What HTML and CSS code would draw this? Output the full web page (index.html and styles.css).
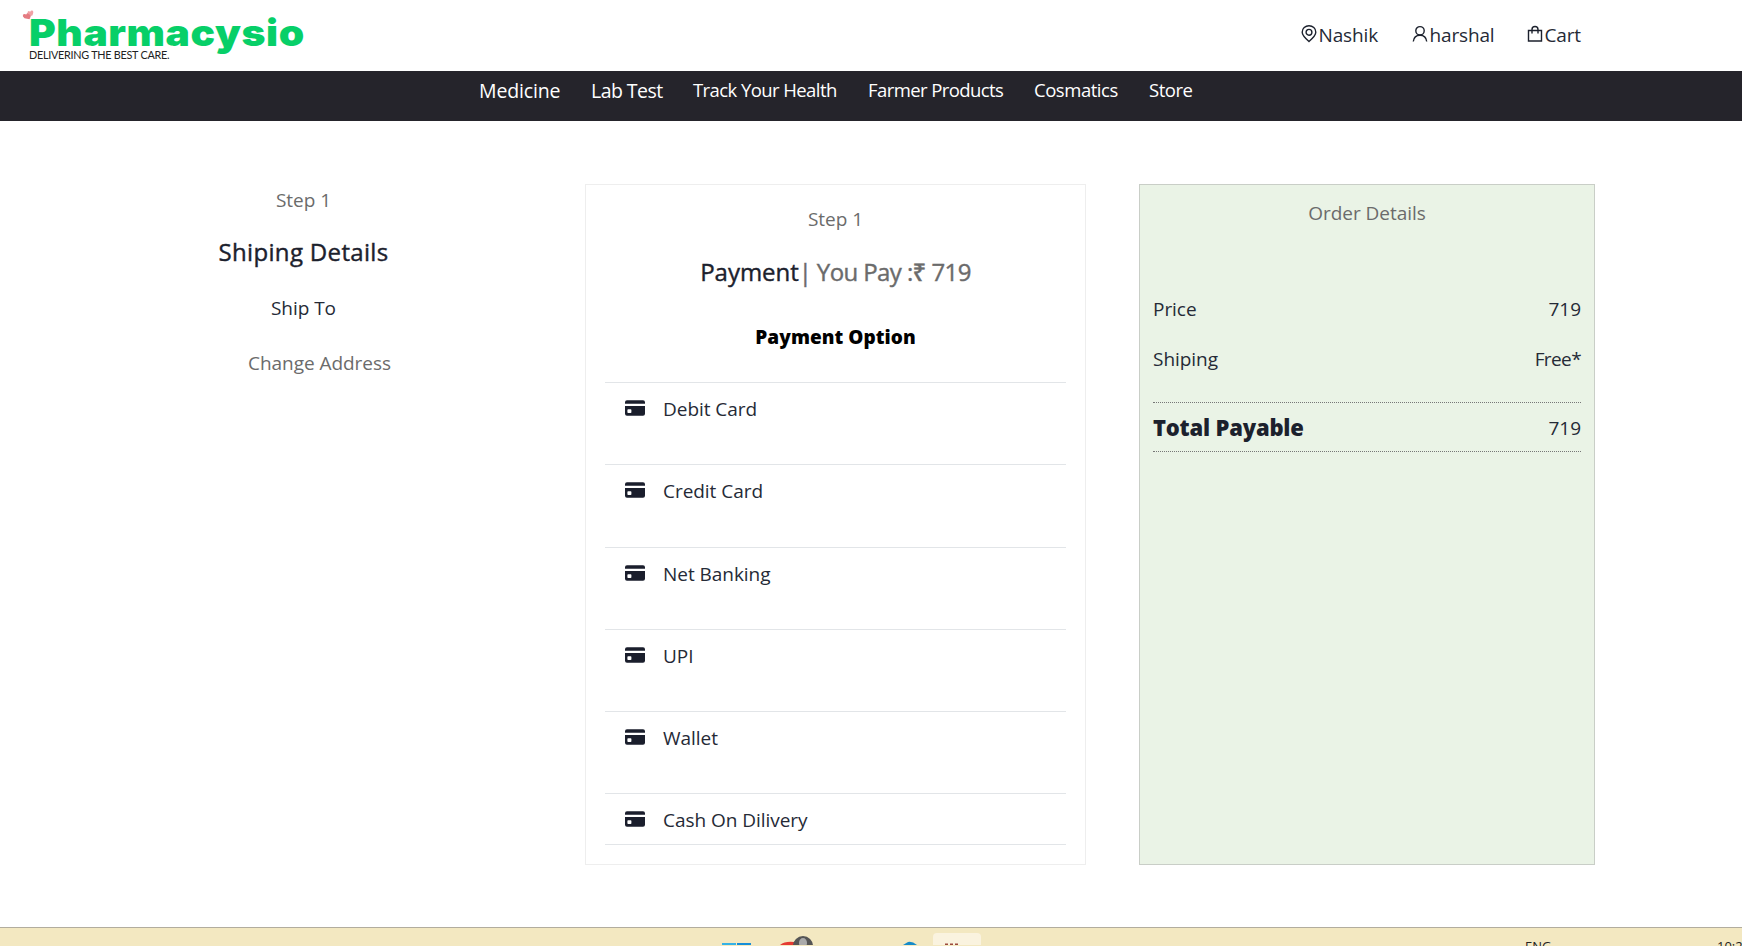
FILE: index.html
```html
<!DOCTYPE html>
<html lang="en">
<head>
<meta charset="utf-8">
<title>Pharmacysio - Payment</title>
<link rel="stylesheet" href="styles.css">
</head>
<body>
<svg class="defs" width="0" height="0">
  <symbol id="card" viewBox="0 0 20 16"><path fill-rule="evenodd" d="M2 0.2H18Q20 0.2 20 2.2V3.8H0V2.2Q0 .2 2 .2ZM0 6H20V13.8Q20 15.8 18 15.8H2Q0 15.8 0 13.8ZM3.200 9.200Q2.400 9.200 2.400 10V12.200Q2.400 13 3.200 13H5.600Q6.400 13 6.400 12.200V10Q6.400 9.200 5.600 9.200Z"/></symbol>
</svg>
<header class="top">
  <div class="logo">
    <svg class="hearts" viewBox="0 0 12 10"><path class="heart-big" d="M7.500 9.200L2.500 8.200Q.2 6.800 .9 4.800Q2.300 3.200 4.200 4.500Q5.200 2.600 7.300 3.300Q9.600 4.600 8.500 7Z"/><path class="heart-small" d="M10 6L5.800 3.600Q5 1.300 6.800 1.100L8.200 1.800Q9.200 -.2 10.900 .8Q12 2.600 10 6Z"/></svg>
    <div class="brand">Pharmacysio</div>
    <div class="tagline">DELIVERING THE BEST CARE.</div>
  </div>
  <div class="account">
    <a class="acc acc-place"><svg class="ic" viewBox="0 0 16 18"><path d="M8 16.500Q1.200 10.500 1.200 7.200A6.800 6.500 0 0 1 14.800 7.200Q14.800 10.500 8 16.500Z"/><circle cx="8" cy="7.300" r="2.900"/></svg><span>Nashik</span></a>
    <a class="acc acc-user"><svg class="ic" viewBox="0 0 16 18"><circle cx="8" cy="5.800" r="4.200"/><path d="M1.300 16.500Q2 10.200 8 10.200T14.700 16.500"/></svg><span>harshal</span></a>
    <a class="acc acc-cart"><svg class="ic" viewBox="0 0 16 18"><path d="M1.500 5.500H14.500V16H1.500ZM5 8.500V4.500Q5 1.500 8 1.500T11 4.500V8.500"/></svg><span>Cart</span></a>
  </div>
</header>
<nav class="nav">
  <a class="n n1">Medicine</a><a class="n n2">Lab Test</a><a class="n n3">Track Your Health</a><a class="n n4">Farmer Products</a><a class="n n5">Cosmatics</a><a class="n n6">Store</a>
</nav>
<main class="main">
  <section class="ship">
    <p class="muted">Step 1</p>
    <h2 class="title ship-title">Shiping Details</h2>
    <p class="ship-to">Ship To</p>
    <a class="muted change">Change Address</a>
  </section>
  <section class="pay">
    <p class="muted pay-step">Step 1</p>
    <h2 class="title pay-title">Payment<span class="grey">| You Pay :₹ 719</span></h2>
    <h3 class="option">Payment Option</h3>
    <ul class="list">
      <li class="row"><svg class="card"><use href="#card"/></svg><span>Debit Card</span></li>
      <li class="row"><svg class="card"><use href="#card"/></svg><span>Credit Card</span></li>
      <li class="row"><svg class="card"><use href="#card"/></svg><span>Net Banking</span></li>
      <li class="row"><svg class="card"><use href="#card"/></svg><span>UPI</span></li>
      <li class="row"><svg class="card"><use href="#card"/></svg><span>Wallet</span></li>
      <li class="row last"><svg class="card"><use href="#card"/></svg><span>Cash On Dilivery</span></li>
    </ul>
  </section>
  <aside class="order">
    <p class="muted order-title">Order Details</p>
    <div class="line"><span>Price</span><span>719</span></div>
    <div class="line line-ship"><span>Shiping</span><span class="free">Free*</span></div>
    <div class="total"><strong class="total-label">Total Payable</strong><span>719</span></div>
  </aside>
</main>
<footer class="taskbar">
  <svg class="t-icons" viewBox="0 0 300 17"><path fill="#35b2e6" d="M22 15H36V17H22Z"/><path fill="#168ed8" d="M37 15H51V17H37Z"/><path fill="#e53b32" d="M80 17Q85 13 94 14V17Z"/><circle cx="103" cy="18" r="10" fill="#555"/><ellipse cx="103" cy="15" rx="4" ry="5" fill="#aaa"/><path fill="#168bc9" d="M203 17L208 14Q212 13 217 17Z"/><rect x="233" y="5" width="48" height="24" rx="4" fill="#faf3df"/><path stroke="#9b4b3d" stroke-width="1.500" stroke-dasharray="3 2" d="M245 16.200H259"/></svg>
  <span class="lang">ENG</span>
  <span class="clock">10:23</span>
</footer>
</body>
</html>
```
FILE: styles.css
```css
* { box-sizing: border-box; }
body { margin: 0; height: 946px; overflow: hidden; display: flex; flex-direction: column; background: #fff; color: #252a36; font: 19px/30px "Open Sans", "Noto Sans", sans-serif; letter-spacing: -0.04px; }
p, h2, h3, ul { margin: 0; padding: 0; font-weight: 400; }
span, a, strong { white-space: nowrap; }
.defs { position: absolute; }
.top { height: 71px; display: flex; justify-content: space-between; padding-right: 161px; flex: none; }
.logo { position: relative; padding: 9px 0 0 29px; }
.hearts { position: absolute; left: 22px; top: 10px; width: 12px; height: 10px; }
.heart-big { fill: #e47b81; }
.heart-small { fill: #f0a0a4; }
.brand { font: 900 37px/48px Inter, sans-serif; color: #07cf68; letter-spacing: 0.5px; height: 39px; transform: scaleX(1.103); transform-origin: 0 0; }
.tagline { font: 10.800px/14px Lato, sans-serif; color: #222; letter-spacing: -0.250px; }
.account { display: flex; padding-top: 20px; }
.acc { display: flex; letter-spacing: -0.15px; }
.acc-place { width: 111px; }
.acc-user { width: 115px; }
.ic { width: 16px; height: 18px; margin: 5px 2px 0 0; fill: none; stroke: #1c212d; stroke-width: 1.400; }
.nav { height: 50px; flex: none; background: #25242b; color: #fff; display: flex; padding: 4px 0 0 479px; line-height: 30px; }
.n { font-size: 18.500px; letter-spacing: -0.46px; }
.n1 { width: 112px; font-size: 19.500px; padding-top: 1px; letter-spacing: -0.15px; }
.n2 { width: 102px; font-size: 19.500px; padding-top: 1px; letter-spacing: -0.55px; }
.n3 { width: 175px; letter-spacing: -0.58px; }
.n4 { width: 166px; letter-spacing: -0.58px; }
.n5 { width: 115px; }
.main { display: flex; padding: 63px 0 0 22px; }
.muted, .grey { color: #6b6b6b; }
.ship { width: 563px; padding-top: 1px; text-align: center; display: flex; flex-direction: column; }
.title { font-size: 24px; line-height: 36px; font-weight: 500; -webkit-text-stroke: 0.4px currentColor; }
.ship-title { padding-top: 19px; height: 55px; letter-spacing: 0.34px; color: #1c212d; }
.ship-to { padding-top: 23px; height: 53px; }
.change { padding: 25px 0 0 32px; }
.pay { width: 501px; height: 681px; border: 1px solid #eee; padding: 19px 19px 0; text-align: center; }
.pay-title { padding-top: 20px; height: 56px; color: #1c212d; letter-spacing: -0.05px; }
.pay-title .grey { letter-spacing: -0.6px; }
.option { font-weight: 800; color: #000; padding-top: 32px; height: 92px; font-size: 19px; letter-spacing: 0.05px; }
.list { list-style: none; }
.row { height: 82.300px; border-top: 1px solid #e2e5e8; display: flex; padding: 11px 0 0 20px; gap: 18px; }
.last { height: 52px; border-bottom: 1px solid #e2e5e8; }
.card { width: 20px; height: 16px; margin-top: 6px; fill: #1a1e2c; }
.order { margin-left: 53px; width: 456px; height: 681px; background: #eaf3e6; border: 1px solid #c9cec7; padding: 13px 13px 0 13px; }
.order-title { text-align: center; height: 82px; }
.line { display: flex; justify-content: space-between; height: 50px; padding-top: 14px; }
.line-ship { height: 72px; }
.free { letter-spacing: -0.6px; }
.total { display: flex; justify-content: space-between; height: 50px; border-top: 1px dotted #777; border-bottom: 1px dotted #777; padding-top: 10px; }
.total-label { font-size: 22px; line-height: 28px; font-weight: 800; letter-spacing: -0.2px; color: #1c212d; }
.taskbar { margin-top: auto; height: 19px; flex: none; background: #f3e8c1; border-top: 1px solid #b2ad9e; display: flex; overflow: hidden; padding-left: 700px; font-size: 13px; letter-spacing: 0; color: #222; }
.t-icons { width: 300px; height: 17px; flex: none; }
.lang { margin-left: 525px; padding-top: 3px; width: 192px; flex: none; }
.clock { padding-top: 3px; }
```
